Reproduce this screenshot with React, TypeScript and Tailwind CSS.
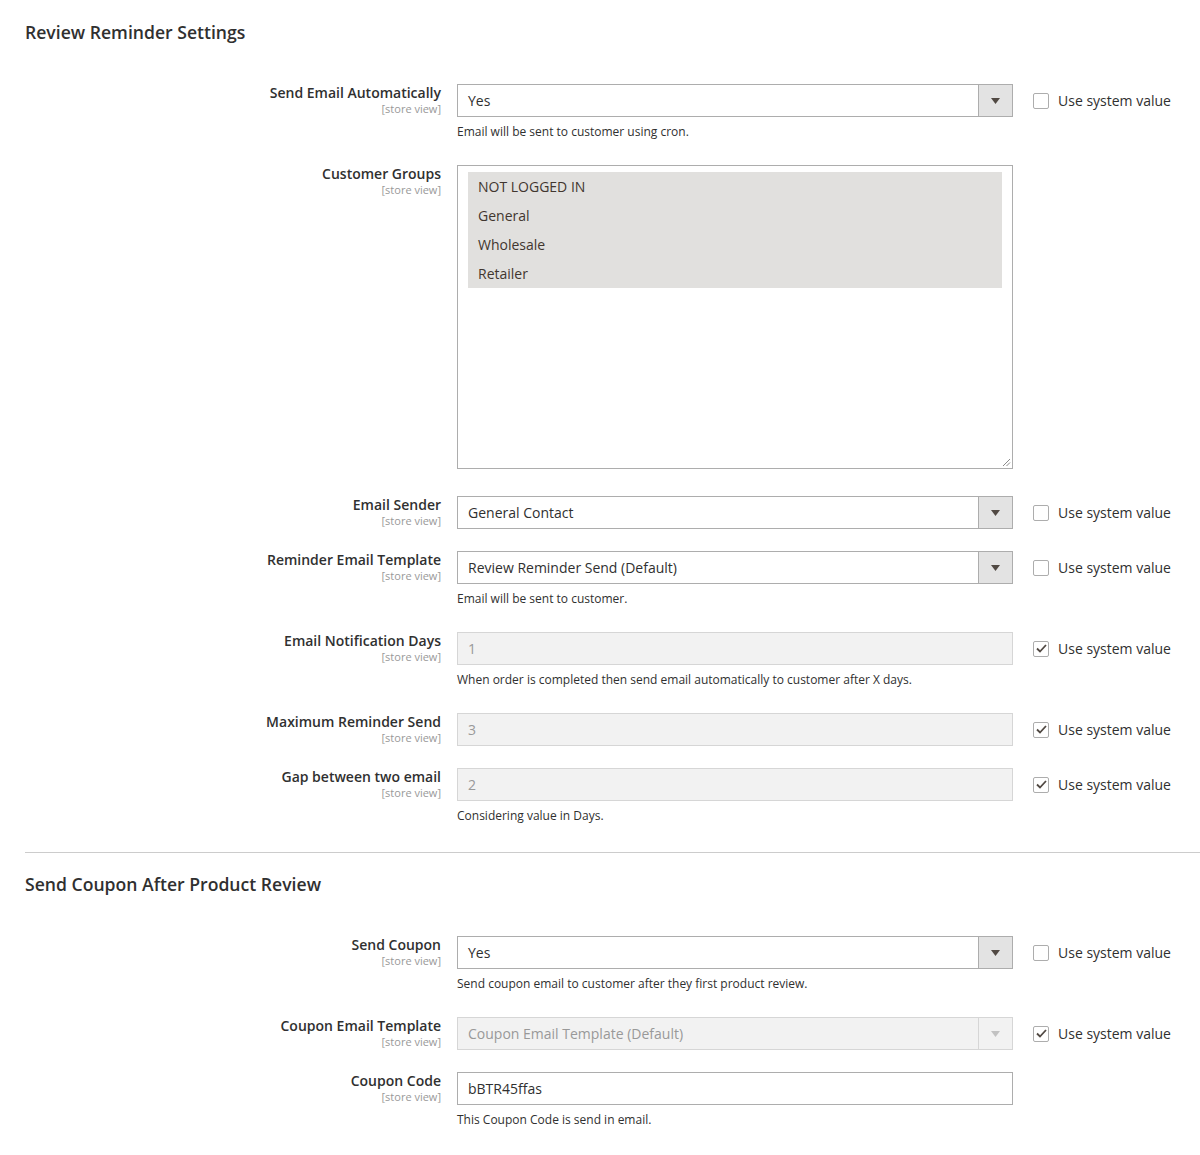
import React from "react";

type Field = {
  label: string;
  kind: "select" | "multi" | "text";
  value?: string;
  disabled?: boolean;
  note?: string;
  system?: boolean | null; // null = no checkbox
};

const reminder: Field[] = [
  { label: "Send Email Automatically", kind: "select", value: "Yes", note: "Email will be sent to customer using cron.", system: false },
  { label: "Customer Groups", kind: "multi", system: null },
  { label: "Email Sender", kind: "select", value: "General Contact", system: false },
  { label: "Reminder Email Template", kind: "select", value: "Review Reminder Send (Default)", note: "Email will be sent to customer.", system: false },
  { label: "Email Notification Days", kind: "text", value: "1", disabled: true, note: "When order is completed then send email automatically to customer after X days.", system: true },
  { label: "Maximum Reminder Send", kind: "text", value: "3", disabled: true, system: true },
  { label: "Gap between two email", kind: "text", value: "2", disabled: true, note: "Considering value in Days.", system: true },
];

const coupon: Field[] = [
  { label: "Send Coupon", kind: "select", value: "Yes", note: "Send coupon email to customer after they first product review.", system: false },
  { label: "Coupon Email Template", kind: "select", value: "Coupon Email Template (Default)", disabled: true, system: true },
  { label: "Coupon Code", kind: "text", value: "bBTR45ffas", note: "This Coupon Code is send in email.", system: null },
];

const groups = ["NOT LOGGED IN", "General", "Wholesale", "Retailer"];

function Arrow({ disabled }: { disabled?: boolean }) {
  return (
    <svg width="9" height="6" viewBox="0 0 9 6">
      <path d="M0 0 H9 L4.5 6 Z" fill={disabled ? "#c2c2c2" : "#514943"} />
    </svg>
  );
}

function Control({ f }: { f: Field }) {
  if (f.kind === "multi") {
    return (
      <div className="relative h-[304px] border border-[#adadad] bg-white px-[10px] pt-[6px] pr-[10px]">
        <div className="bg-[#e1e0de]">
          {groups.map((g) => (
            <div key={g} className="h-[29px] px-[10px] text-[14px] leading-[29px] text-[#41362f]">
              {g}
            </div>
          ))}
        </div>
        <svg className="absolute bottom-[1px] right-[1px]" width="10" height="10" viewBox="0 0 10 10">
          <path d="M9 2 L2 9 M9 5.5 L5.5 9" stroke="#8a8a8a" strokeWidth="1" />
        </svg>
      </div>
    );
  }
  if (f.kind === "select") {
    return (
      <div
        className={
          f.disabled
            ? "flex h-[33px] border border-[#d6d6d6] bg-[#f2f2f2]"
            : "flex h-[33px] border border-[#adadad] bg-white"
        }
      >
        <div className={f.disabled ? "flex-1 px-[10px] text-[14px] leading-[31px] text-[#999]" : "flex-1 px-[10px] text-[14px] leading-[31px] text-[#303030]"}>
          {f.value}
        </div>
        <div
          className={
            f.disabled
              ? "flex w-[34px] items-center justify-center border-l border-[#d6d6d6] bg-[#f2f2f2]"
              : "flex w-[34px] items-center justify-center border-l border-[#adadad] bg-[#e3e3e3]"
          }
        >
          <Arrow disabled={f.disabled} />
        </div>
      </div>
    );
  }
  return (
    <div
      className={
        f.disabled
          ? "h-[33px] border border-[#d6d6d6] bg-[#f2f2f2] px-[10px] text-[14px] leading-[31px] text-[#999]"
          : "h-[33px] border border-[#adadad] bg-white px-[10px] text-[14px] leading-[31px] text-[#303030]"
      }
    >
      {f.value}
    </div>
  );
}

function Checkbox({ checked }: { checked: boolean }) {
  return (
    <div className="flex h-[16px] w-[16px] items-center justify-center rounded-[2px] border border-[#adadad] bg-white">
      {checked && (
        <svg width="11" height="9" viewBox="0 0 11 9">
          <path d="M1 4.5 L4 7.5 L10 1" fill="none" stroke="#514943" strokeWidth="1.8" />
        </svg>
      )}
    </div>
  );
}

function Row({ f }: { f: Field }) {
  return (
    <div className={f.kind === "multi" ? "flex pb-[27px]" : "flex pb-[22px]"}>
      <div className="w-[416px] shrink-0 text-right">
        <div className="text-[14px] font-semibold leading-[18px] text-[#303030]">{f.label}</div>
        <div className="text-[11px] leading-[14px] text-[#999]">[store view]</div>
      </div>
      <div className="ml-[16px] w-[556px] shrink-0">
        <Control f={f} />
        {f.note && <div className="mt-[4px] text-[12px] leading-[22px] text-[#303030]">{f.note}</div>}
      </div>
      {f.system !== null && f.system !== undefined && (
        <div className="ml-[20px] flex h-[33px] items-center gap-[9px]">
          <Checkbox checked={f.system} />
          <span className="text-[14px] text-[#303030]">Use system value</span>
        </div>
      )}
    </div>
  );
}

function Section({ title, fields, top }: { title: string; fields: Field[]; top: string }) {
  return (
    <div>
      <h2 className={top + " pb-[40px] text-[17.6px] font-semibold leading-[24px] text-[#303030]"}>{title}</h2>
      {fields.map((f) => (
        <Row key={f.label} f={f} />
      ))}
    </div>
  );
}

export default function App() {
  return (
    <div className="min-h-[1155px] bg-white pl-[25px]" style={{ fontFamily: '"Open Sans", "Liberation Sans", sans-serif' }}>
      <Section title="Review Reminder Settings" fields={reminder} top="pt-[20px]" />
      <div className="mt-[3px] border-t border-[#cccccc]" />
      <Section title="Send Coupon After Product Review" fields={coupon} top="pt-[19px]" />
    </div>
  );
}
